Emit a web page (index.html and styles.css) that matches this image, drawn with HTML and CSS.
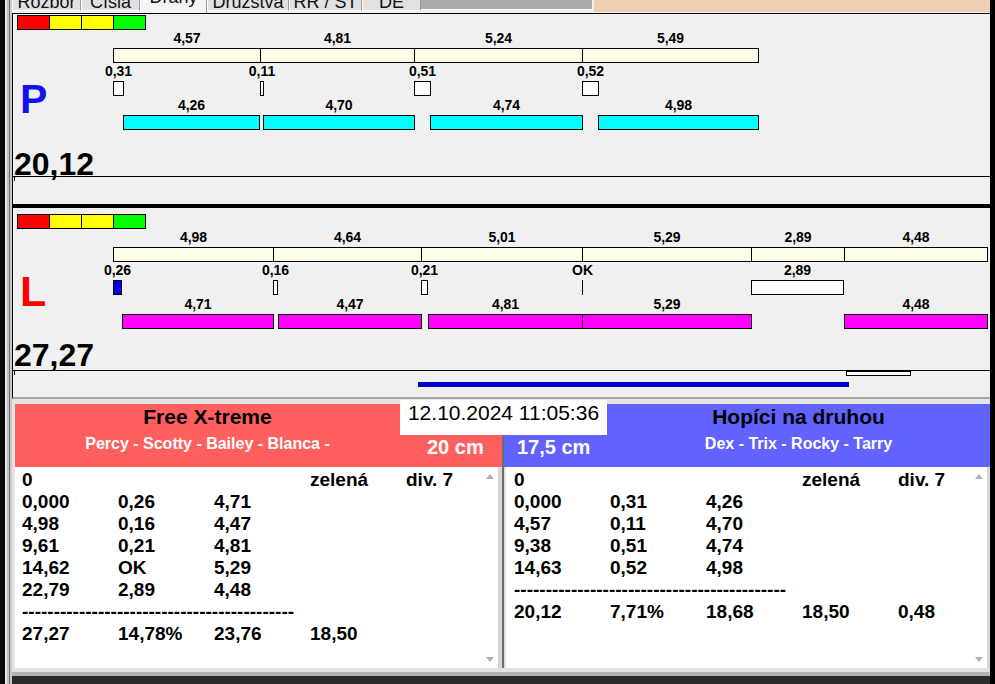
FILE: index.html
```html
<!DOCTYPE html>
<html lang="sk">
<head>
<meta charset="utf-8">
<title>Dráhy</title>
<link rel="stylesheet" href="styles.css">
</head>
<body>
<div class="screen">
  <div class="frame-left"></div>
  <div class="window">
    <div class="tabbar">
      <div class="tabs">
        <div class="tab t1"><span>Rozbor</span></div>
        <div class="tab t2"><span>Čísla</span></div>
        <div class="tab t3 active"><span>Dráhy</span></div>
        <div class="tab t4"><span>Družstva</span></div>
        <div class="tab t5"><span>RR / ST</span></div>
        <div class="tab t6"><span>DE</span></div>
      </div>
      <div class="tab-fill"></div>
      <div class="tab-beige"></div>
    </div>

    <div class="panel panel-p">
      <div class="legend"><span class="lg red"></span><span class="lg yellow"></span><span class="lg yellow"></span><span class="lg green"></span></div>
      <div class="chart">
        <div class="side"><div class="letter letter-p">P</div></div>
        <div class="track">
          <div class="item r1" style="left:0px;width:148px"><div class="lbl">4,57</div><div class="bar cream"></div></div>
          <div class="item r1" style="left:147px;width:155px"><div class="lbl">4,81</div><div class="bar cream"></div></div>
          <div class="item r1" style="left:301px;width:169px"><div class="lbl">5,24</div><div class="bar cream"></div></div>
          <div class="item r1" style="left:469px;width:177px"><div class="lbl">5,49</div><div class="bar cream"></div></div>

          <div class="item r2" style="left:0px;width:11px"><div class="lbl">0,31</div><div class="bar white"></div></div>
          <div class="item r2" style="left:147px;width:4px"><div class="lbl">0,11</div><div class="bar white"></div></div>
          <div class="item r2" style="left:301px;width:17px"><div class="lbl">0,51</div><div class="bar white"></div></div>
          <div class="item r2" style="left:469px;width:17px"><div class="lbl">0,52</div><div class="bar white"></div></div>

          <div class="item r3" style="left:10px;width:137px"><div class="lbl">4,26</div><div class="bar cyan"></div></div>
          <div class="item r3" style="left:150px;width:152px"><div class="lbl">4,70</div><div class="bar cyan"></div></div>
          <div class="item r3" style="left:317px;width:153px"><div class="lbl">4,74</div><div class="bar cyan"></div></div>
          <div class="item r3" style="left:485px;width:161px"><div class="lbl">4,98</div><div class="bar cyan"></div></div>
        </div>
      </div>
      <div class="score">20,12</div>
      <div class="rule"></div>
    </div>

    <div class="panel panel-l">
      <div class="legend"><span class="lg red"></span><span class="lg yellow"></span><span class="lg yellow"></span><span class="lg green"></span></div>
      <div class="chart">
        <div class="side"><div class="letter letter-l">L</div></div>
        <div class="track">
          <div class="item r1" style="left:0px;width:161px"><div class="lbl">4,98</div><div class="bar cream"></div></div>
          <div class="item r1" style="left:160px;width:149px"><div class="lbl">4,64</div><div class="bar cream"></div></div>
          <div class="item r1" style="left:308px;width:162px"><div class="lbl">5,01</div><div class="bar cream"></div></div>
          <div class="item r1" style="left:469px;width:170px"><div class="lbl">5,29</div><div class="bar cream"></div></div>
          <div class="item r1" style="left:638px;width:94px"><div class="lbl">2,89</div><div class="bar cream"></div></div>
          <div class="item r1" style="left:731px;width:144px"><div class="lbl">4,48</div><div class="bar cream"></div></div>

          <div class="item r2" style="left:0px;width:9px"><div class="lbl">0,26</div><div class="bar blue"></div></div>
          <div class="item r2" style="left:160px;width:5px"><div class="lbl">0,16</div><div class="bar white"></div></div>
          <div class="item r2" style="left:308px;width:7px"><div class="lbl">0,21</div><div class="bar white"></div></div>
          <div class="item r2" style="left:469px;width:1px"><div class="lbl">OK</div><div class="tick"></div></div>
          <div class="item r2" style="left:638px;width:93px"><div class="lbl">2,89</div><div class="bar white"></div></div>

          <div class="item r3" style="left:9px;width:152px"><div class="lbl">4,71</div><div class="bar mag"></div></div>
          <div class="item r3" style="left:165px;width:144px"><div class="lbl">4,47</div><div class="bar mag"></div></div>
          <div class="item r3" style="left:315px;width:155px"><div class="lbl">4,81</div><div class="bar mag"></div></div>
          <div class="item r3" style="left:469px;width:170px"><div class="lbl">5,29</div><div class="bar mag"></div></div>
          <div class="item r3" style="left:731px;width:144px"><div class="lbl">4,48</div><div class="bar mag"></div></div>
        </div>
      </div>
      <div class="score">27,27</div>
      <div class="rule"></div>
      <div class="timeline">
        <div class="marker"></div>
        <div class="progress"></div>
      </div>
    </div>

    <div class="bottom">
      <div class="team team-left">
        <div class="head head-left">
          <div class="names">
            <div class="team-name">Free X-treme</div>
            <div class="players">Percy - Scotty - Bailey - Blanca -</div>
          </div>
          <div class="cm">20 cm</div>
        </div>
        <div class="ta">
          <div class="rows">
            <div class="row"><span>0</span><span></span><span></span><span>zelená</span><span>div. 7</span></div>
            <div class="row"><span>0,000</span><span>0,26</span><span>4,71</span></div>
            <div class="row"><span>4,98</span><span>0,16</span><span>4,47</span></div>
            <div class="row"><span>9,61</span><span>0,21</span><span>4,81</span></div>
            <div class="row"><span>14,62</span><span>OK</span><span>5,29</span></div>
            <div class="row"><span>22,79</span><span>2,89</span><span>4,48</span></div>
            <div class="row"><span class="dash">-------------------------------------------</span></div>
            <div class="row"><span>27,27</span><span>14,78%</span><span>23,76</span><span>18,50</span></div>
          </div>
          <div class="scroll"><div class="arrow-up"></div><div class="arrow-down"></div></div>
        </div>
      </div>
      <div class="split"></div>
      <div class="team team-right">
        <div class="head head-right">
          <div class="cm">17,5 cm</div>
          <div class="names">
            <div class="team-name">Hopíci na druhou</div>
            <div class="players">Dex - Trix - Rocky - Tarry</div>
          </div>
        </div>
        <div class="ta">
          <div class="rows">
            <div class="row"><span>0</span><span></span><span></span><span>zelená</span><span>div. 7</span></div>
            <div class="row"><span>0,000</span><span>0,31</span><span>4,26</span></div>
            <div class="row"><span>4,57</span><span>0,11</span><span>4,70</span></div>
            <div class="row"><span>9,38</span><span>0,51</span><span>4,74</span></div>
            <div class="row"><span>14,63</span><span>0,52</span><span>4,98</span></div>
            <div class="row"><span class="dash">-------------------------------------------</span></div>
            <div class="row"><span>20,12</span><span>7,71%</span><span>18,68</span><span>18,50</span><span>0,48</span></div>
          </div>
          <div class="scroll"><div class="arrow-up"></div><div class="arrow-down"></div></div>
        </div>
      </div>
      <div class="datebox">12.10.2024 11:05:36</div>
    </div>

    <div class="footer"></div>
  </div>
  <div class="frame-right"></div>
</div>
</body>
</html>
```

FILE: styles.css
```css
* { box-sizing: border-box; margin: 0; padding: 0; }
html, body { width: 995px; height: 684px; overflow: hidden; }
body { background: #000; font-family: "Liberation Sans", Arial, sans-serif; color: #000; }

.screen { display: flex; width: 995px; height: 684px; }
.frame-left {
  width: 12px; flex: none;
  background: linear-gradient(to right, #0a0a0a 0 5px, #e6e6e6 5px 7px, #c4c4c4 7px 9px, #6e6e6e 9px 10px, #c8c8c8 10px 12px);
}
.frame-right { width: 5px; flex: none; background: #000; }
.window { width: 978px; flex: none; display: flex; flex-direction: column; background: #f0f0f0; }

/* tabs */
.tabbar { height: 13px; flex: none; display: flex; align-items: flex-start; background: #f0f0f0; }
.tabs { display: flex; align-items: flex-start; }
.tab {
  height: 11px; overflow: hidden; background: #e1e1e1;
  border-left: 1px solid #fff; border-right: 1px solid #9a9a9a; border-bottom: 1px solid #fdfdfd;
  font-size: 18px; line-height: 18px; text-align: center; white-space: nowrap; color: #111;
}
.tab span { display: block; margin-top: -7px; }
.tab.active { height: 13px; background: #f4f4f4; border-bottom: none; }
.tab.active span { margin-top: -12px; }
.t1 { width: 69px; } .t2 { width: 59px; } .t3 { width: 67px; }
.t4 { width: 82px; } .t5 { width: 73px; } .t6 { width: 59px; }
.tab-fill { width: 171px; height: 10px; background: #ababab; margin-right: 2px; border-bottom: 1px solid #fff; }
.tab-beige { flex: 1; height: 12px; background: #efcfb1; }

/* panels */
.panel { flex: none; background: #f0f0f0; border-left: 1px solid #000; display: flex; flex-direction: column; }
.panel-p { height: 191px; border-top: 1px solid #000; padding-top: 1px; }
.panel-l { height: 195px; border-top: 4px solid #000; padding-top: 6px; border-bottom: 2px solid #a6a6a6; }

.legend { display: flex; margin-left: 4px; width: 129px; height: 15px; border: 1px solid #000; border-right: none; flex: none; }
.lg { width: 32px; border-right: 1px solid #000; }
.red { background: #ff0000; }
.yellow { background: #ffff00; }
.green { background: #00ff00; }

.chart { display: flex; margin-top: 1px; height: 99px; flex: none; }
.side { width: 100px; flex: none; padding-left: 7px; }
.letter { font-weight: bold; }
.letter-p { font-size: 41px; line-height: 41px; margin-top: 48px; color: #1212ee; }
.letter-l { font-size: 43px; line-height: 43px; margin-top: 40px; color: #ff0000; }
.track { position: relative; flex: 1; }

.item { position: absolute; top: 0; display: flex; flex-direction: column; }
.item.r2 { top: 33px; }
.item.r3 { top: 67px; }
.lbl {
  height: 17px; line-height: 15px; display: flex; justify-content: center;
  white-space: nowrap; font-size: 14px; font-weight: bold;
}
.bar { height: 15px; border: 1px solid #000; }
.cream { background: #fffde7; }
.cyan { background: #00ffff; }
.mag { background: #ff00ff; }
.white { background: #fff; }
.blue { background: #0000ee; }
.tick { height: 15px; background: #000; }

.score { font-size: 32px; font-weight: bold; line-height: 24px; height: 24px; padding-left: 1px; flex: none; }
.panel-p .score { margin-top: 22px; }
.panel-l .score { margin-top: 14px; }
.rule { height: 1px; background: #000; position: relative; flex: none; }
.rule::after { content: ""; position: absolute; left: 1px; top: 1px; width: 1px; height: 4px; background: #000; }
.panel-l .rule { margin-top: 3px; }

.timeline { position: relative; flex: 1; }
.marker { position: absolute; left: 833px; top: 0; width: 65px; height: 5px; background: #fff; border: 1px solid #000; }
.progress { position: absolute; left: 405px; top: 11px; width: 431px; height: 5px; background: #0000c8; }

/* bottom */
.bottom { position: relative; display: flex; flex: none; height: 269px; padding: 5px 0 0 3px; background: #e4e4e4; }
.team { display: flex; flex-direction: column; }
.team-left { width: 487px; }
.team-right { width: 486px; }
.split { width: 2px; background: #6e6e6e; }

.head { height: 63px; display: grid; flex: none; }
.head-left { background: #ff5f5f; grid-template-columns: 385px 1fr; }
.head-right { background: #6262ff; grid-template-columns: 103px 1fr; }
.names { text-align: center; padding-top: 1px; white-space: nowrap; }
.team-name { font-size: 21px; font-weight: bold; line-height: 24px; }
.players { font-size: 16px; font-weight: bold; color: #fff; line-height: 20px; margin-top: 5px; }
.cm { font-size: 20px; font-weight: bold; color: #fff; line-height: 24px; padding-top: 31px; white-space: nowrap; }
.head-left .cm { padding-left: 27px; }
.head-right .cm { padding-left: 13px; }

.datebox {
  position: absolute; left: 388px; top: 1px; width: 207px; height: 35px;
  background: #fff; font-size: 21px; line-height: 25px; text-align: center; white-space: nowrap;
}

.ta { height: 201px; background: #fff; display: flex; flex: none; }
.team-left .ta { border-right: 4px solid #d6d6d6; }
.team-right .ta { border-left: 2px solid #e2e2e2; border-right: 3px solid #d6d6d6; }
.rows { flex: 1; min-width: 0; overflow: hidden; padding-top: 2px; font-size: 19px; font-weight: bold; line-height: 22px; white-space: nowrap; }
.team-left .rows { padding-left: 7px; }
.team-right .rows { padding-left: 8px; }
.row { display: flex; height: 22px; }
.row span { width: 96px; flex: none; }
.row span.dash { width: auto; }
.scroll { width: 16px; flex: none; display: flex; flex-direction: column; justify-content: space-between; align-items: center; padding: 7px 0 6px; }
.arrow-up { width: 0; height: 0; border-left: 4px solid transparent; border-right: 4px solid transparent; border-bottom: 5px solid #b0b0b0; }
.arrow-down { width: 0; height: 0; border-left: 4px solid transparent; border-right: 4px solid transparent; border-top: 5px solid #b0b0b0; }

.footer { flex: 1; background: linear-gradient(#e2e2e2 0 4px, #b4b4b4 4px 8px, #2a2a2a 8px); }
```
